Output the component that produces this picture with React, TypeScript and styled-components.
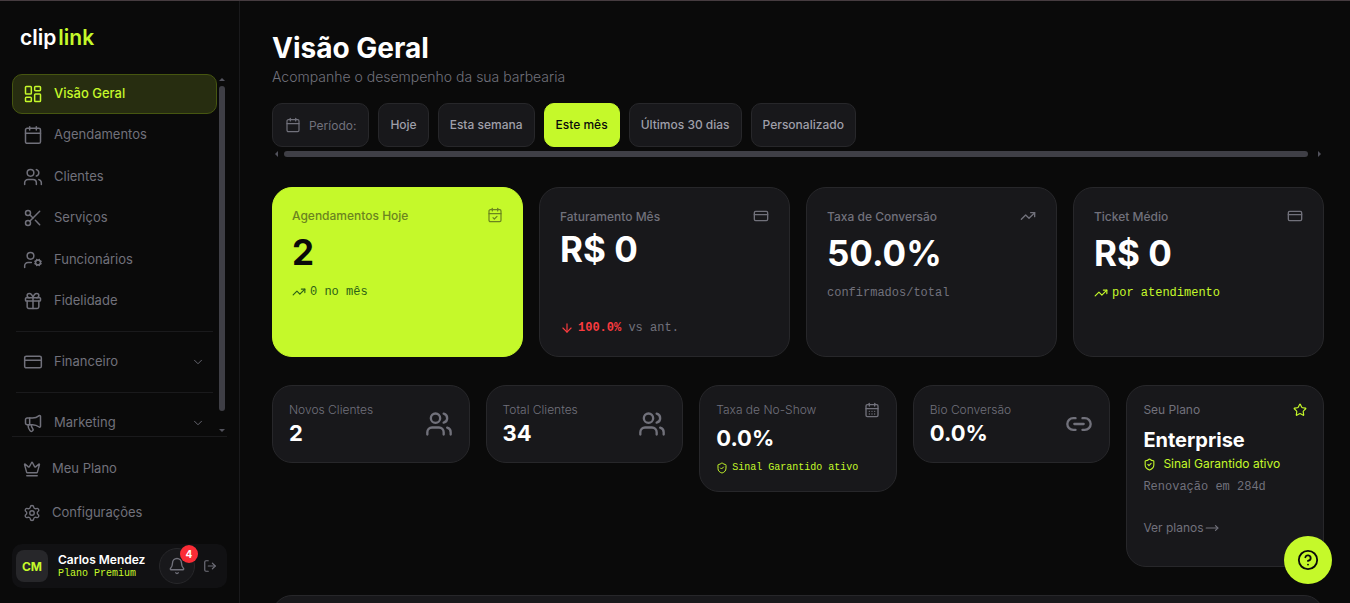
import React from "react";
import styled, { createGlobalStyle, css } from "styled-components";
import {
  LayoutDashboard, Calendar, Users, Scissors, UserCog, Gift, CreditCard, Megaphone,
  Crown, Settings, Bell, LogOut, ChevronDown, CalendarCheck, CalendarDays, TrendingUp,
  ArrowDown, Link2, ShieldCheck, Star, CircleQuestionMark, MoveRight,
} from "lucide-react";

const lime = "#c5f92a";
const sans = `Inter, "Liberation Sans", sans-serif`;
const mono = `"Liberation Mono", "DejaVu Sans Mono", monospace`;

const Global = createGlobalStyle`
  *, *::before, *::after { box-sizing: border-box; }
  html, body { margin: 0; background: #0a0a0a; }
  body { font-family: ${sans}; color: #fff; font-size: 13px; overflow: hidden; }
  button { font-family: inherit; cursor: pointer; }
  a { color: inherit; text-decoration: none; }
  h1, p, ul { margin: 0; padding: 0; }
  ul { list-style: none; }
  svg { flex: none; display: block; }
`;

const Shell = styled.div`
  display: flex;
  height: 100vh;
  border-top: 1px solid #463c40;
`;

const Sidebar = styled.aside`
  width: 240px;
  flex: none;
  display: flex;
  flex-direction: column;
  border-right: 1px solid #1a1a1c;
  padding: 0 12px 15px;
`;

const Logo = styled.a`
  display: flex;
  gap: 2px;
  height: 73px;
  padding: 23px 8px 0;
  font-size: 21px;
  line-height: 28px;
  font-weight: 600;
  span { color: ${lime}; }
`;

const Scroller = styled.div`
  flex: 1;
  min-height: 0;
  display: flex;
`;

const Nav = styled.nav`
  flex: 1;
  overflow: hidden;
`;

const NavList = styled.ul`
  height: 247px;
  display: flex;
  flex-direction: column;
  justify-content: space-between;
`;

const itemStyle = css`
  display: flex;
  align-items: center;
  width: 100%;
  border: 1px solid transparent;
  background: none;
  color: #71717b;
  font-size: 13px;
  line-height: 20px;
  text-align: left;
  span { padding-bottom: 2px; }
`;

const NavLink = styled.a<{ $active?: boolean }>`
  ${itemStyle}
  height: 40px;
  gap: 11px;
  padding: 0 10px;
  border-radius: 10px;
  ${(p) => p.$active && css`
    color: ${lime};
    font-weight: 500;
    background: #272d10;
    border-color: #465610;
  `}
`;

const NavGroup = styled.button`
  ${itemStyle}
  height: 40px;
  gap: 11px;
  padding: 0 11px 0 10px;
  span { flex: 1; }
`;

const Divider = styled.hr`
  border: 0;
  height: 1px;
  margin: 10px 4px;
  background: #1a1a1c;
`;

const VTrack = styled.div`
  width: 10px;
  display: flex;
  flex-direction: column;
  align-items: center;
  gap: 5px;
  padding: 4px 0;
`;

const VThumb = styled.div`
  width: 6px;
  height: 325px;
  border-radius: 3px;
  background: #3f3f46;
  margin-bottom: auto;
`;

const Arrow = styled.i<{ $dir: "up" | "down" | "left" | "right" }>`
  border: 3px solid transparent;
  ${(p) => p.$dir === "up" && "border-bottom-color: #52525c; border-top: 0;"}
  ${(p) => p.$dir === "down" && "border-top-color: #52525c; border-bottom: 0;"}
  ${(p) => p.$dir === "left" && "border-right-color: #52525c; border-left: 0;"}
  ${(p) => p.$dir === "right" && "border-left-color: #52525c; border-right: 0;"}
`;

const FootNav = styled.div`
  border-top: 1px solid #1a1a1c;
  padding: 10px 0 9px;
`;

const FootLink = styled.a`
  ${itemStyle}
  height: 44px;
  gap: 11px;
  padding: 0 10px;
`;

const UserCard = styled.div`
  display: flex;
  align-items: center;
  height: 44px;
  padding: 0 10px 0 4px;
  border-radius: 10px;
  background: #111113;
`;

const Avatar = styled.div`
  width: 32px;
  height: 32px;
  display: grid;
  place-items: center;
  border-radius: 8px;
  background: #27272a;
  color: ${lime};
  font-size: 12px;
  font-weight: 700;
`;

const UserText = styled.div`
  flex: 1;
  margin-left: 10px;
  padding-top: 2px;
  white-space: nowrap;
  strong { display: block; font-size: 12px; line-height: 14px; font-weight: 600; }
  small { display: block; font: 10px/14px ${mono}; color: ${lime}; }
`;

const BellButton = styled.button`
  position: relative;
  width: 36px;
  height: 36px;
  display: grid;
  place-items: center;
  padding: 0;
  border: 1px solid #27272a;
  border-radius: 50%;
  background: #18181b;
  color: #71717b;
`;

const Badge = styled.span`
  position: absolute;
  top: -4px;
  right: -4px;
  width: 18px;
  height: 18px;
  border-radius: 50%;
  background: #fb2c36;
  color: #fff;
  font-size: 10px;
  line-height: 18px;
  font-weight: 700;
`;

const IconButton = styled.button`
  margin-left: 8px;
  padding: 0;
  border: 0;
  background: none;
  color: #71717b;
`;

const Main = styled.main`
  flex: 1;
  min-width: 0;
  padding: 30px 26px 0 32px;
  overflow: hidden;
`;

const Title = styled.h1`
  font-size: 28px;
  line-height: 34px;
  font-weight: 700;
`;

const Subtitle = styled.p`
  color: #71717b;
  font-size: 14px;
  font-weight: 300;
  line-height: 20px;
  margin-top: 2px;
`;

const Periods = styled.div`
  display: flex;
  gap: 9px;
  margin-top: 16px;
`;

const chip = css`
  display: flex;
  align-items: center;
  height: 44px;
  border: 1px solid #27272a;
  border-radius: 10px;
  background: #18181b;
  font-size: 12px;
  white-space: nowrap;
`;

const PeriodLabel = styled.div`
  ${chip}
  gap: 8px;
  padding: 0 12px;
  color: #71717b;
`;

const Chip = styled.button<{ $active?: boolean }>`
  ${chip}
  padding: 0 11px 2px;
  color: #9f9fa9;
  font-weight: 500;
  ${(p) => p.$active && css`
    color: #0a0a0a;
    background: ${lime};
    border-color: ${lime};
  `}
`;

const HTrack = styled.div`
  display: flex;
  align-items: center;
  height: 6px;
  margin-top: 4px;
  padding: 0 3px;
`;

const HThumb = styled.div`
  flex: 1;
  height: 6px;
  margin: 0 10px 0 6px;
  border-radius: 3px;
  background: #3f3f46;
`;

const Grid = styled.section<{ $cols: number; $top: number; $start?: boolean }>`
  display: grid;
  grid-template-columns: repeat(${(p) => p.$cols}, minmax(0, 1fr));
  gap: 16px;
  margin-top: ${(p) => p.$top}px;
  align-items: ${(p) => (p.$start ? "start" : "stretch")};
`;

const surface = css`
  border: 1px solid #27272a;
  border-radius: 20px;
  background: #18181b;
`;

const Card = styled.article<{ $lime?: boolean }>`
  ${surface}
  min-height: 170px;
  display: flex;
  flex-direction: column;
  padding: 20px;
  color: #71717b;
  ${(p) => p.$lime && css`
    padding: 19px;
    background: ${lime};
    border-color: ${lime};
    color: #6b841f;
  `}
`;

const CardHead = styled.header`
  display: flex;
  justify-content: space-between;
  align-items: center;
  height: 17px;
  font-size: 12px;
  font-weight: 500;
  svg { margin-bottom: 2px; }
`;

const Value = styled.strong<{ $dark?: boolean; $tight?: boolean }>`
  color: ${(p) => (p.$dark ? "#0a0a0a" : "#fff")};
  font-size: 35px;
  line-height: 40px;
  font-weight: 700;
  margin-top: ${(p) => (p.$tight ? 4 : 8)}px;
`;

const Note = styled.p<{ $color?: string; $bottom?: boolean }>`
  display: flex;
  align-items: center;
  gap: 4px;
  margin-top: ${(p) => (p.$bottom ? "auto" : "12px")};
  font: 12px/16px ${mono};
  color: ${(p) => p.$color || "#71717b"};
  b { color: #fb3b3f; }
`;

const Small = styled.article<{ $h: number }>`
  ${surface}
  min-height: ${(p) => p.$h}px;
  display: flex;
  flex-direction: column;
  padding: 16px;
  color: #71717b;
`;

const SmallRow = styled.div`
  display: flex;
  justify-content: space-between;
  align-items: center;
`;

const Label = styled.p<{ $medium?: boolean }>`
  font-size: 12px;
  line-height: 16px;
  font-weight: ${(p) => (p.$medium ? 400 : 300)};
`;

const SmallValue = styled.strong<{ $size?: number; $gap?: number }>`
  display: block;
  color: #fff;
  font-size: ${(p) => p.$size || 22}px;
  line-height: 26px;
  font-weight: 700;
  margin-top: ${(p) => p.$gap ?? 2}px;
`;

const Tiny = styled.p`
  display: flex;
  align-items: center;
  gap: 4px;
  margin-top: 10px;
  font: 10px/14px ${mono};
  color: ${lime};
  white-space: nowrap;
`;

const Guarantee = styled.p`
  display: flex;
  align-items: center;
  gap: 7px;
  margin-top: 2px;
  color: ${lime};
  font-size: 12px;
  line-height: 18px;
`;

const Renewal = styled.p`
  font: 12px/16px ${mono};
  margin-top: 6px;
`;

const PlanLink = styled.a`
  display: flex;
  align-items: center;
  gap: 1px;
  margin-top: 24px;
  font-size: 12px;
  line-height: 18px;
`;

const Panel = styled.section`
  ${surface}
  height: 200px;
  margin-top: 28px;
`;

const Help = styled.button`
  position: fixed;
  right: 18px;
  bottom: 19px;
  width: 48px;
  height: 48px;
  display: grid;
  place-items: center;
  padding: 0;
  border: 0;
  border-radius: 50%;
  background: ${lime};
  color: #0a0a0a;
`;

const nav = [
  { label: "Visão Geral", Icon: LayoutDashboard, active: true },
  { label: "Agendamentos", Icon: Calendar },
  { label: "Clientes", Icon: Users },
  { label: "Serviços", Icon: Scissors },
  { label: "Funcionários", Icon: UserCog },
  { label: "Fidelidade", Icon: Gift },
];

const periods = ["Hoje", "Esta semana", "Este mês", "Últimos 30 dias", "Personalizado"];

export default function App() {
  return (
    <>
      <Global />
      <Shell>
        <Sidebar>
          <Logo href="#">clip<span>link</span></Logo>
          <Scroller>
            <Nav>
              <NavList>
                {nav.map(({ label, Icon, active }) => (
                  <li key={label}>
                    <NavLink href="#" $active={active}>
                      <Icon size={20} strokeWidth={1.8} /><span>{label}</span>
                    </NavLink>
                  </li>
                ))}
              </NavList>
              <Divider />
              <NavGroup><CreditCard size={20} strokeWidth={1.8} /><span>Financeiro</span><ChevronDown size={14} strokeWidth={1.5} /></NavGroup>
              <Divider />
              <NavGroup><Megaphone size={20} strokeWidth={1.8} /><span>Marketing</span><ChevronDown size={14} strokeWidth={1.5} /></NavGroup>
            </Nav>
            <VTrack><Arrow $dir="up" /><VThumb /><Arrow $dir="down" /></VTrack>
          </Scroller>
          <FootNav>
            <FootLink href="#"><Crown size={18} strokeWidth={1.8} /><span>Meu Plano</span></FootLink>
            <FootLink href="#"><Settings size={18} strokeWidth={1.8} /><span>Configurações</span></FootLink>
          </FootNav>
          <UserCard>
            <Avatar>CM</Avatar>
            <UserText><strong>Carlos Mendez</strong><small>Plano Premium</small></UserText>
            <BellButton aria-label="Notificações"><Bell size={18} strokeWidth={1.8} /><Badge>4</Badge></BellButton>
            <IconButton aria-label="Sair"><LogOut size={14} strokeWidth={2} /></IconButton>
          </UserCard>
        </Sidebar>
        <Main>
          <Title>Visão Geral</Title>
          <Subtitle>Acompanhe o desempenho da sua barbearia</Subtitle>
          <Periods>
            <PeriodLabel><Calendar size={16} strokeWidth={1.8} />Período:</PeriodLabel>
            {periods.map((p) => <Chip key={p} $active={p === "Este mês"}>{p}</Chip>)}
          </Periods>
          <HTrack><Arrow $dir="left" /><HThumb /><Arrow $dir="right" /></HTrack>

          <Grid $cols={4} $top={30}>
            <Card $lime>
              <CardHead>Agendamentos Hoje<CalendarCheck size={16} strokeWidth={1.8} /></CardHead>
              <Value $dark>2</Value>
              <Note $color="#2b6116"><TrendingUp size={14} strokeWidth={2} />0 no mês</Note>
            </Card>
            <Card>
              <CardHead>Faturamento Mês<CreditCard size={16} strokeWidth={2} /></CardHead>
              <Value $tight>R$ 0</Value>
              <Note $bottom><ArrowDown size={14} strokeWidth={2} color="#fb3b3f" /><span><b>100.0%</b> vs ant.</span></Note>
            </Card>
            <Card>
              <CardHead>Taxa de Conversão<TrendingUp size={16} strokeWidth={2} /></CardHead>
              <Value>50.0%</Value>
              <Note>confirmados/total</Note>
            </Card>
            <Card>
              <CardHead>Ticket Médio<CreditCard size={16} strokeWidth={2} /></CardHead>
              <Value>R$ 0</Value>
              <Note $color={lime}><TrendingUp size={14} strokeWidth={2} />por atendimento</Note>
            </Card>
          </Grid>

          <Grid $cols={5} $top={28} $start>
            <Small $h={78}>
              <SmallRow><div><Label>Novos Clientes</Label><SmallValue>2</SmallValue></div><Users size={28} strokeWidth={2} /></SmallRow>
            </Small>
            <Small $h={78}>
              <SmallRow><div><Label>Total Clientes</Label><SmallValue>34</SmallValue></div><Users size={28} strokeWidth={2} /></SmallRow>
            </Small>
            <Small $h={107}>
              <SmallRow><Label>Taxa de No-Show</Label><CalendarDays size={16} strokeWidth={2} /></SmallRow>
              <SmallValue $gap={7}>0.0%</SmallValue>
              <Tiny><ShieldCheck size={12} strokeWidth={2} />Sinal Garantido ativo</Tiny>
            </Small>
            <Small $h={78}>
              <SmallRow><div><Label>Bio Conversão</Label><SmallValue>0.0%</SmallValue></div><Link2 size={28} strokeWidth={2} /></SmallRow>
            </Small>
            <Small $h={182}>
              <SmallRow><Label $medium>Seu Plano</Label><Star size={14} color={lime} /></SmallRow>
              <SmallValue $size={20} $gap={9}>Enterprise</SmallValue>
              <Guarantee><ShieldCheck size={13} strokeWidth={2} />Sinal Garantido ativo</Guarantee>
              <Renewal>Renovação em 284d</Renewal>
              <PlanLink href="#">Ver planos<MoveRight size={14} strokeWidth={2} /></PlanLink>
            </Small>
          </Grid>
          <Panel />
        </Main>
      </Shell>
      <Help aria-label="Ajuda"><CircleQuestionMark size={22} strokeWidth={2} /></Help>
    </>
  );
}
